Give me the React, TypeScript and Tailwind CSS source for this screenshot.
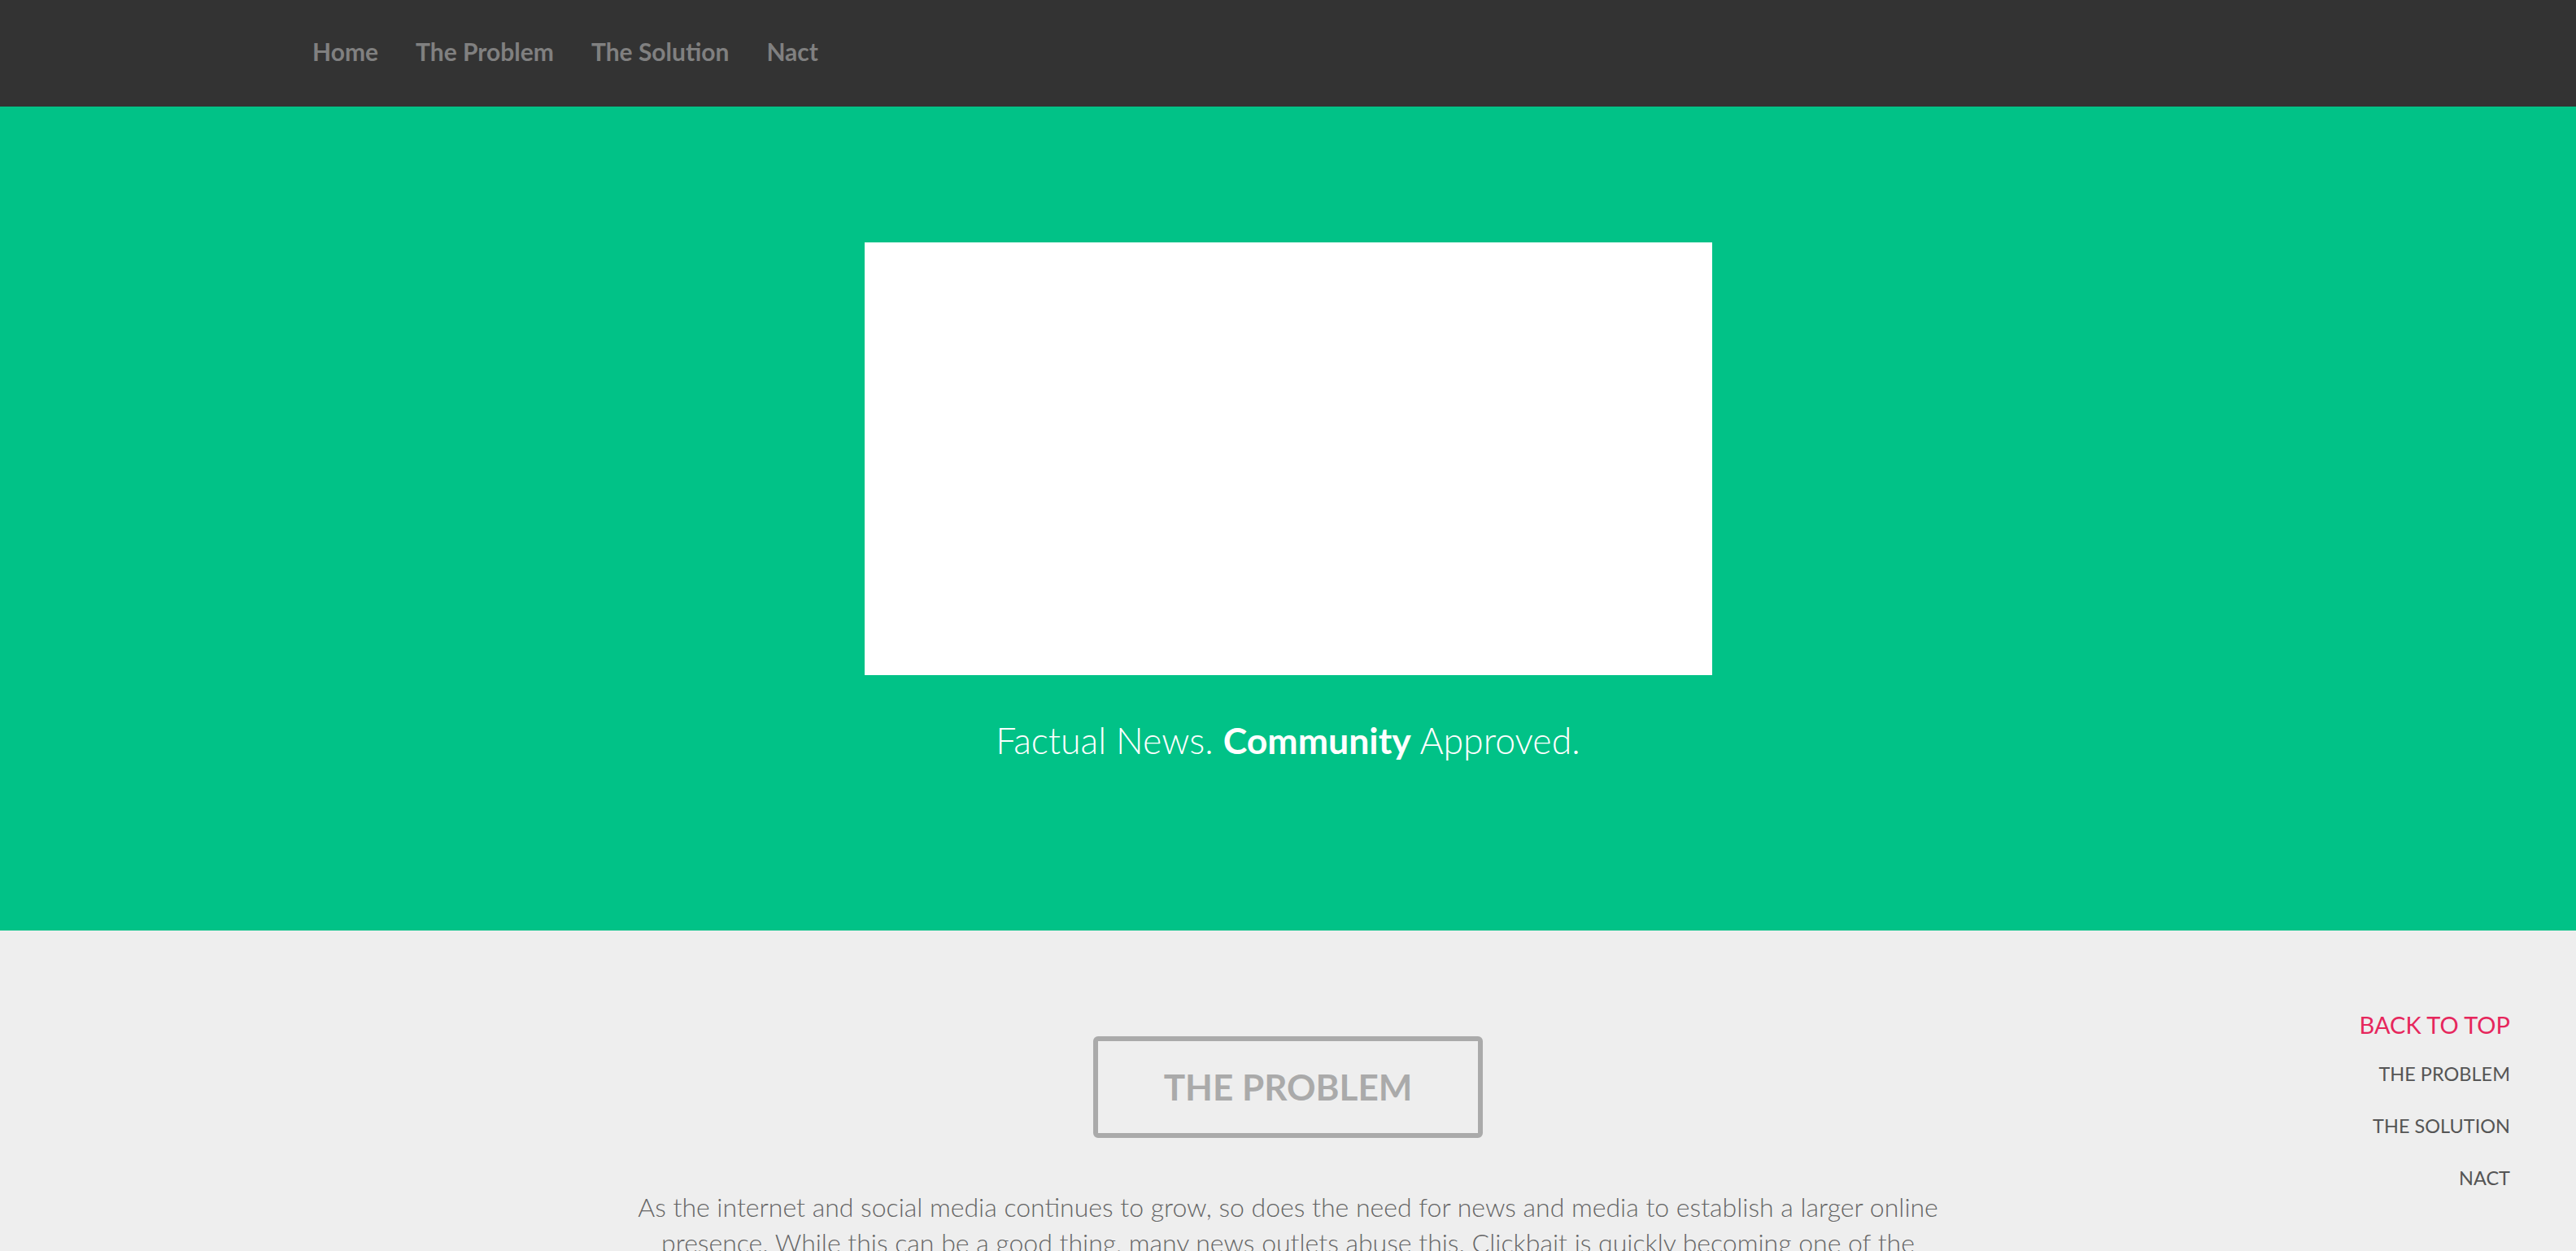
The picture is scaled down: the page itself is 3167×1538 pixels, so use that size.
import React from 'react';

const navLinks = ['Home', 'The Problem', 'The Solution', 'Nact'];
const sideLinks = ['THE PROBLEM', 'THE SOLUTION', 'NACT'];

const Navbar = () => (
  <nav className="h-[131px] w-full shrink-0 bg-[#333333] pl-[361px] pt-[45px]">
    <ul className="flex">
      {navLinks.map((link) => (
        <li key={link}>
          <a href="#" className="px-[23px] text-[30px] font-bold leading-[1.2] text-[#808080]">
            {link}
          </a>
        </li>
      ))}
    </ul>
  </nav>
);

const Hero = () => (
  <header className="flex w-full shrink-0 flex-col items-center bg-[#01c287] pt-[167px] pb-[207px]">
    <div className="h-[532px] w-[1042px] bg-white" />
    <p className="mt-[53px] text-[44.6px] font-light leading-[1.2] text-white">
      Factual News. <span className="font-bold">Community</span> Approved.
    </p>
  </header>
);

const SideNav = () => (
  <div className="absolute top-[99px] right-[81px] flex flex-col items-end">
    <a href="#" className="text-[29px] leading-[1.2] text-[#e6265c]">
      BACK TO TOP
    </a>
    <ul className="mt-[11px] flex flex-col items-end">
      {sideLinks.map((link) => (
        <li key={link} className="text-[23.5px] leading-[64px] text-[#555555]">
          {link}
        </li>
      ))}
    </ul>
  </div>
);

const Problem = () => (
  <section className="relative flex w-full flex-1 flex-col items-center bg-[#eeeeee] pt-[130px]">
    <h2 className="flex h-[125px] w-[479px] shrink-0 items-center justify-center rounded-[6px] border-[6px] border-[#aaaaaa] text-[44px] font-bold text-[#aaaaaa]">
      THE PROBLEM
    </h2>
    <p className="mt-[63px] max-w-[1620px] text-center text-[32px] font-light leading-[44px] text-[#666666]">
      As the internet and social media continues to grow, so does the need for news and media to establish a larger online
      presence. While this can be a good thing, many news outlets abuse this. Clickbait is quickly becoming one of the
      biggest problems facing online news today, with misleading headlines designed only to attract clicks rather than to
      inform readers.
    </p>
    <SideNav />
  </section>
);

export default function App() {
  return (
    <div className="flex h-[1538px] w-full flex-col overflow-hidden font-[Lato,sans-serif]">
      <Navbar />
      <Hero />
      <Problem />
    </div>
  );
}
